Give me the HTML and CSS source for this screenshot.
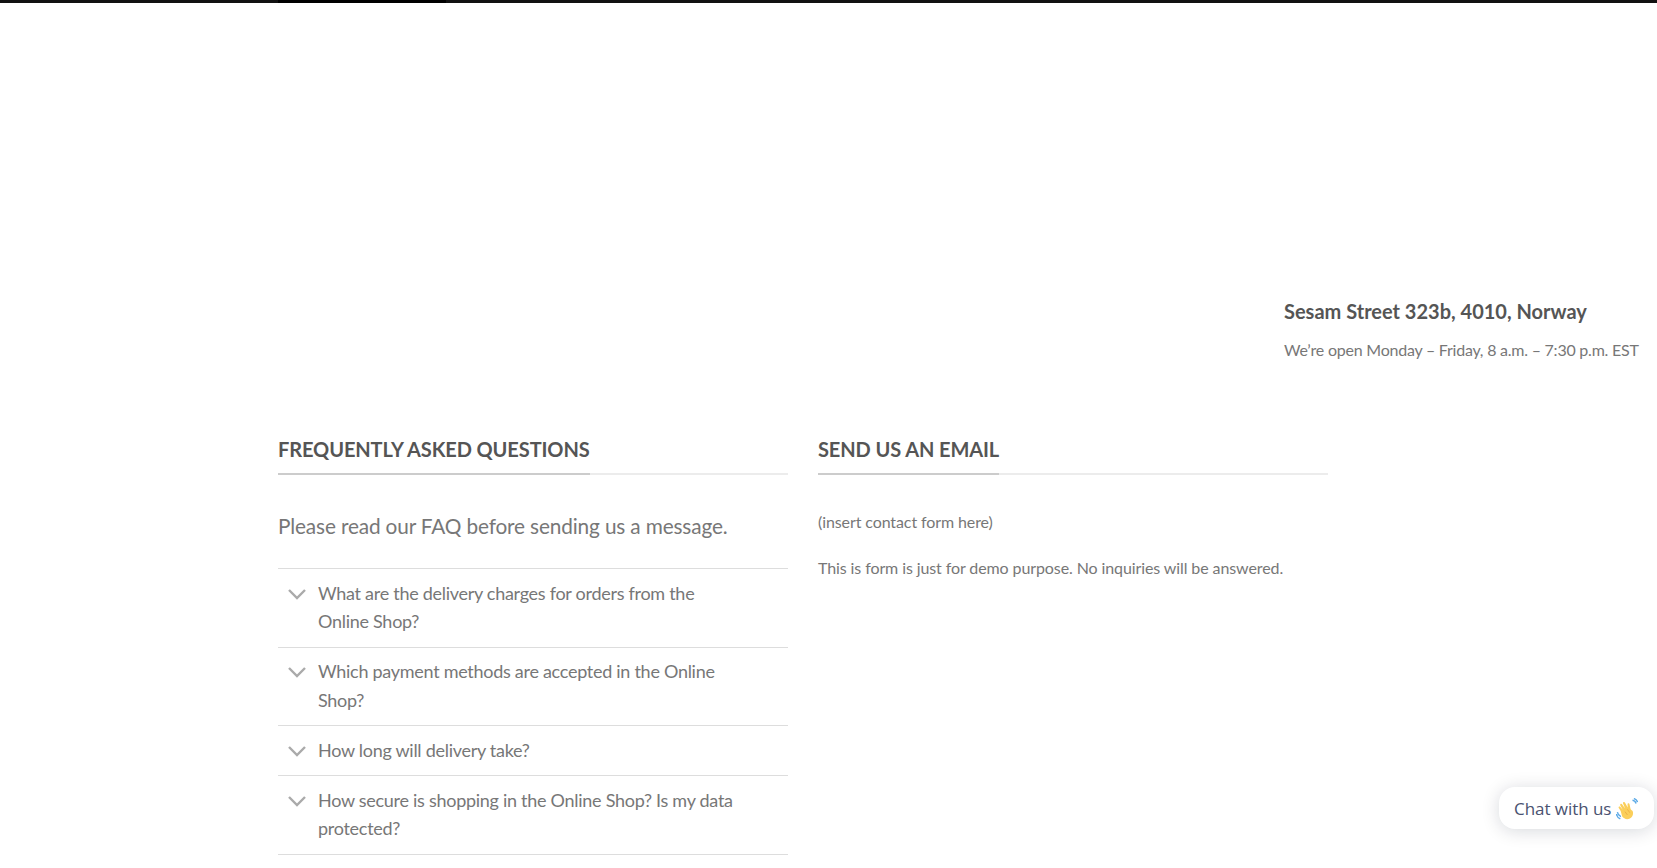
FILE: index.html
```html
<!DOCTYPE html>
<html lang="en">
<head>
    <meta charset="UTF-8">
    <meta name="viewport" content="width=device-width, initial-scale=1.0">
    <title>Contact</title>
    <link rel="stylesheet" href="styles.css">
</head>
<body>
    <div class="top-bar"><span class="top-bar-active"></span></div>

    <section class="address">
        <h3>Sesam Street 323b, 4010, Norway</h3>
        <p>We’re open Monday – Friday, 8 a.m. – 7:30 p.m. EST</p>
    </section>

    <section class="columns">
        <div class="col">
            <h3 class="section-title"><span>Frequently Asked Questions</span></h3>
            <p class="lead">Please read our FAQ before sending us a message.</p>
            <div class="accordion">
                <a class="accordion-item">
                    <svg class="chevron" viewBox="0 0 18 11"><path d="M1 1l8 8 8-8"/></svg>
                    <span>What are the delivery charges for orders from the Online Shop?</span>
                </a>
                <a class="accordion-item">
                    <svg class="chevron" viewBox="0 0 18 11"><path d="M1 1l8 8 8-8"/></svg>
                    <span>Which payment methods are accepted in the Online Shop?</span>
                </a>
                <a class="accordion-item">
                    <svg class="chevron" viewBox="0 0 18 11"><path d="M1 1l8 8 8-8"/></svg>
                    <span>How long will delivery take?</span>
                </a>
                <a class="accordion-item">
                    <svg class="chevron" viewBox="0 0 18 11"><path d="M1 1l8 8 8-8"/></svg>
                    <span>How secure is shopping in the Online Shop? Is my data protected?</span>
                </a>
            </div>
        </div>
        <div class="col">
            <h3 class="section-title"><span>Send us an email</span></h3>
            <p class="form-note">(insert contact form here)</p>
            <p class="form-note">This is form is just for demo purpose. No inquiries will be answered.</p>
        </div>
    </section>

    <div class="chat-widget">
        <span>Chat with us</span>
        <svg class="wave" viewBox="0 0 24 24">
            <g transform="rotate(-10 12 13) translate(.5 0)">
                <path class="wave-hand" d="M4.500 13 3 9.500c-.6-1.500 1.300-2.300 2-1l2 3.500-1.800-5c-.5-1.600 1.600-2.300 2.200-.8l2.300 4.800-1.200-5.700c-.3-1.600 1.900-2 2.300-.5l2 5.700.3-3.300c.2-1.500 2.200-1.300 2.200.2l.2 4.600c.1 2.300 2 1.800 2 4.300 0 3-1.500 5.500-4.500 6.500-3.500 1.200-6.500-.7-8-3.800z"/>
                <path class="wave-crease" d="M9 14.500l2 4M12 12.500l2 4"/>
            </g>
            <path class="wave-lines" d="M18 2.500c1.900.3 3.300 1.500 3.900 3.500M19.500 .6c2 .4 3.300 1.700 4 3.800M1.500 15.500c.4 2.300 1.700 3.900 3.800 4.800M.4 17.500c.5 2.400 2 4.300 4.300 5.400"/>
        </svg>
    </div>
</body>
</html>
```

FILE: styles.css
```css
html, body {
    height: 100%;
    overflow: hidden;
}
body {
    margin: 0;
    background: #fff;
    color: #777;
    font-family: Lato, "Liberation Sans", sans-serif;
    font-size: 16px;
    line-height: 1.6;
}
.top-bar {
    height: 3px;
    padding-left: 278px;
    background: #111;
}
.top-bar-active {
    display: block;
    width: 168px;
    height: 3px;
    background: #000;
}
.address {
    padding: 292px 0 0 1284px;
    white-space: nowrap;
}
.address h3 {
    margin: 0;
    color: #555;
    font-size: 20px;
    font-weight: 700;
    line-height: 32px;
}
.address p {
    margin: 10px 0 0;
    font-size: 16px;
    letter-spacing: -.23px;
    line-height: 26px;
}
.columns {
    display: flex;
    gap: 30px;
    padding: 71px 0 0 278px;
}
.col {
    width: 510px;
}
.section-title {
    margin: 0;
    border-bottom: 2px solid #ececec;
    color: #555;
    font-size: 20px;
    font-weight: 700;
    letter-spacing: -.1px;
    line-height: 30px;
    text-transform: uppercase;
}
.section-title span {
    display: inline-block;
    margin-bottom: -2px;
    padding-bottom: 9px;
    border-bottom: 2px solid #ccc;
}
.lead {
    margin: 33px 0 0;
    font-size: 20.8px;
    letter-spacing: -.15px;
    line-height: 35px;
}
.accordion {
    margin-top: 25px;
    border-bottom: 1px solid #ddd;
}
.accordion-item {
    display: flex;
    padding: 9.700px 40px 10.300px 10px;
    border-top: 1px solid #ddd;
    font-size: 18px;
    letter-spacing: -.28px;
    line-height: 1.6;
}
.chevron {
    flex: none;
    width: 18px;
    height: 11px;
    margin: 10px 12px 0 0;
    fill: none;
    stroke: #aaa;
    stroke-width: 2.400;
}
.form-note {
    margin: 34px 0 0;
    letter-spacing: -.1px;
    line-height: 26px;
}
.form-note + .form-note {
    margin-top: 20px;
}
.chat-widget {
    position: absolute;
    left: 1499px;
    top: 787px;
    display: flex;
    align-items: center;
    gap: 5px;
    box-sizing: border-box;
    width: 155px;
    height: 42px;
    padding: 2px 0 0 15px;
    border-radius: 16px;
    background: #fff;
    box-shadow: 0 2px 18px rgba(0, 18, 46, .16);
    color: #4a5270;
    font-family: "Open Sans", sans-serif;
    font-size: 17px;
    letter-spacing: -.05px;
    white-space: nowrap;
}
.wave {
    flex: none;
    width: 22px;
    height: 22px;
}
.wave-lines {
    fill: none;
    stroke: #5aa9e6;
    stroke-width: 1.500;
}
.wave-hand {
    fill: #fbcf5b;
}
.wave-crease {
    fill: none;
    stroke: #e8a33d;
    stroke-width: .7;
}
```
